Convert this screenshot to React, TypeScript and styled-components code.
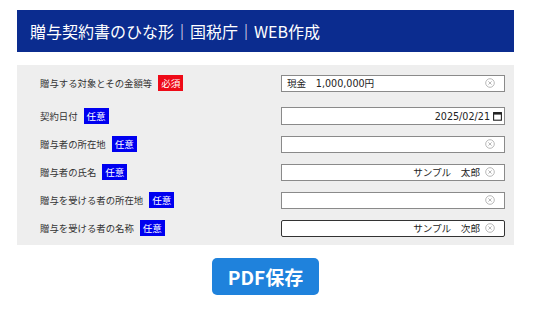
import React from "react";
import styled, { createGlobalStyle } from "styled-components";

const Global = createGlobalStyle`
  html, body { margin: 0; padding: 0; background: #fff; }
  body { font-family: "Noto Sans CJK JP", "Noto Sans", sans-serif; }
`;

const Page = styled.div`
  width: 497px;
  margin: 10px 0 0 17px;
  display: flex;
  flex-direction: column;
`;

const Header = styled.h1`
  margin: 0;
  height: 42px;
  background: #0b2c8f;
  color: #fff;
  font-size: 16px;
  font-weight: 400;
  display: flex;
  align-items: center;
  padding-left: 13px;
`;

const Panel = styled.div`
  margin-top: 13px;
  background: #eeeeee;
  padding: 4px 9px 3px 23px;
  display: flex;
  flex-direction: column;
`;

const Row = styled.div<{ $extra?: number }>`
  height: 28px;
  margin-bottom: ${(p) => p.$extra ?? 0}px;
  display: flex;
  align-items: center;
  justify-content: space-between;
`;

const Label = styled.div`
  display: flex;
  align-items: center;
  gap: 6px;
  font-size: 9.4px;
  color: #333;
`;

const Badge = styled.span<{ $required?: boolean }>`
  display: inline-flex;
  align-items: center;
  justify-content: center;
  height: 16px;
  padding: 0 3px;
  font-size: 9.6px;
  color: #fff;
  background: ${(p) => (p.$required ? "#ee0a17" : "#0000f0")};
`;

const Field = styled.div<{ $focused?: boolean; $tall?: boolean }>`
  box-sizing: border-box;
  width: 224px;
  height: ${(p) => (p.$tall ? 18 : 17)}px;
  border: ${(p) => (p.$focused ? "1.5px solid #333" : "1px solid #8a8a8a")};
  border-radius: ${(p) => (p.$focused ? 2 : 0)}px;
  background: #fff;
  display: flex;
  align-items: center;
  padding: 0 ${(p) => (p.$tall ? 2 : 9)}px 0 5px;
  gap: ${(p) => (p.$tall ? 3 : 5)}px;
`;

const Input = styled.input<{ $right?: boolean }>`
  flex: 1;
  min-width: 0;
  border: none;
  outline: none;
  padding: 0;
  background: transparent;
  font-family: "DejaVu Sans", "Noto Sans CJK JP", sans-serif;
  font-size: 9.6px;
  color: #222;
  text-align: ${(p) => (p.$right ? "right" : "left")};
`;

const Button = styled.button`
  align-self: center;
  margin-top: 13px;
  width: 107px;
  height: 37px;
  border: none;
  border-radius: 5px;
  background: #1f82dc;
  color: #fff;
  font-family: "Noto Sans CJK JP", sans-serif;
  font-weight: 700;
  font-size: 19px;
  display: flex;
  align-items: center;
  justify-content: center;
  padding: 0;
`;

const ClearIcon = () => (
  <svg width="10" height="10" viewBox="0 0 10 10">
    <circle cx="5" cy="5" r="4.3" fill="none" stroke="#b0b0b0" strokeWidth="0.9" />
    <path d="M3.4 3.4 L6.6 6.6 M6.6 3.4 L3.4 6.6" stroke="#b0b0b0" strokeWidth="0.9" />
  </svg>
);

const CalendarIcon = () => (
  <svg width="9" height="10" viewBox="0 0 9 10">
    <rect x="0.6" y="1.6" width="7.8" height="7.6" fill="none" stroke="#222" strokeWidth="1.1" />
    <rect x="0.6" y="1.6" width="7.8" height="2" fill="#222" />
  </svg>
);

type Item = {
  label: string;
  required?: boolean;
  value: string;
  right?: boolean;
  date?: boolean;
  focused?: boolean;
  extra?: number;
};

const items: Item[] = [
  { label: "贈与する対象とその金額等", required: true, value: "現金　1,000,000円", extra: 5 },
  { label: "契約日付", value: "2025/02/21", right: true, date: true },
  { label: "贈与者の所在地", value: "" },
  { label: "贈与者の氏名", value: "サンプル　太郎", right: true },
  { label: "贈与を受ける者の所在地", value: "" },
  { label: "贈与を受ける者の名称", value: "サンプル　次郎", right: true, focused: true },
];

export default function App() {
  return (
    <>
      <Global />
      <Page>
        <Header>贈与契約書のひな形｜国税庁｜WEB作成</Header>
        <Panel>
          {items.map((it) => (
            <Row key={it.label} $extra={it.extra}>
              <Label>
                {it.label}
                <Badge $required={it.required}>{it.required ? "必須" : "任意"}</Badge>
              </Label>
              <Field $focused={it.focused} $tall={it.date}>
                <Input $right={it.right} defaultValue={it.value} readOnly />
                {it.date ? <CalendarIcon /> : <ClearIcon />}
              </Field>
            </Row>
          ))}
        </Panel>
        <Button>PDF保存</Button>
      </Page>
    </>
  );
}
